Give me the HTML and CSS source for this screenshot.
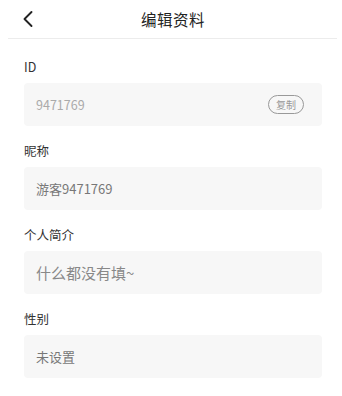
FILE: index.html
```html
<!DOCTYPE html>
<html lang="zh">
<head>
<meta charset="utf-8">
<link rel="stylesheet" href="styles.css">
</head>
<body>
<div class="header">
  <span class="back"><svg width="14" height="18" viewBox="0 0 14 18"><path d="M10.5 2 L3.5 9 L10.5 16" fill="none" stroke="#222" stroke-width="1.9" stroke-linecap="round" stroke-linejoin="round"/></svg></span>
  <div class="title">编辑资料</div>
</div>
<div class="divider"></div>
<div class="content">
  <div class="field">
    <div class="label">ID</div>
    <div class="box"><span class="value id">9471769</span><span class="copy">复制</span></div>
  </div>
  <div class="field">
    <div class="label">昵称</div>
    <div class="box"><span class="value">游客9471769</span></div>
  </div>
  <div class="field">
    <div class="label">个人简介</div>
    <div class="box"><span class="value big">什么都没有填~</span></div>
  </div>
  <div class="field">
    <div class="label">性别</div>
    <div class="box"><span class="value">未设置</span></div>
  </div>
</div>
</body>
</html>
```
FILE: styles.css
```css
html, body {
  margin: 0;
  padding: 0;
  background: #fff;
  font-family: "Noto Sans CJK SC", "Noto Sans", sans-serif;
}
.header {
  position: relative;
  height: 38px;
  display: flex;
  align-items: center;
  justify-content: center;
}
.back {
  position: absolute;
  left: 21px;
  top: 10px;
  display: flex;
}
.title {
  font-size: 15.5px;
  color: #222;
  letter-spacing: 0.5px;
  margin-left: 4px;
}
.divider {
  height: 1px;
  background: #ececec;
  margin: 0 5px 0 8px;
}
.content {
  padding: 18px 20px 0 24px;
}
.field {
  margin-bottom: 15px;
}
.label {
  font-size: 12.5px;
  line-height: 20px;
  color: #333;
  margin-bottom: 6px;
}
.box {
  height: 43px;
  background: #f7f7f7;
  border-radius: 4px;
  display: flex;
  align-items: center;
  justify-content: space-between;
  padding: 0 18px 0 12px;
}
.value {
  font-size: 13px;
  color: #777;
}
.value.id {
  font-size: 12.5px;
  color: #aaa;
}
.value.big {
  font-size: 15px;
  color: #888;
}
.copy {
  font-size: 10px;
  color: #999;
  border: 1px solid #999;
  border-radius: 10px;
  height: 17px;
  line-height: 17px;
  padding: 0 7px;
}
```
